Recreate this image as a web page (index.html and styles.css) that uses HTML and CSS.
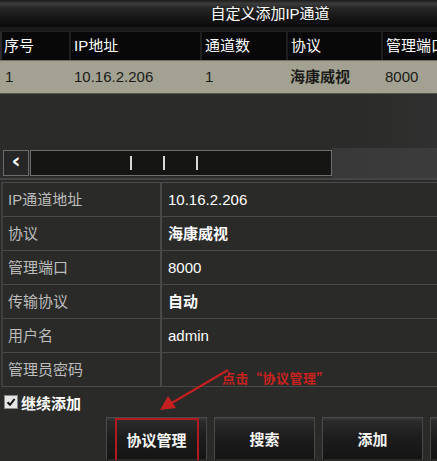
FILE: index.html
```html
<!DOCTYPE html>
<html>
<head>
<meta charset="utf-8">
<link rel="stylesheet" href="styles.css">
</head>
<body>
<div class="dialog">
  <div class="titlebar"><span class="title">自定义添加IP通道</span></div>
  <div class="list">
    <div class="thead">
      <div class="c c1">序号</div>
      <div class="c c2">IP地址</div>
      <div class="c c3">通道数</div>
      <div class="c c4">协议</div>
      <div class="c c5">管理端口</div>
    </div>
    <div class="trow">
      <div class="c c1">1</div>
      <div class="c c2">10.16.2.206</div>
      <div class="c c3">1</div>
      <div class="c c4 bold">海康威视</div>
      <div class="c c5">8000</div>
    </div>
    <div class="empty"></div>
    <div class="scrollrow">
      <div class="sbtn">&lsaquo;</div>
      <div class="track">
        <span class="tick"></span><span class="tick"></span><span class="tick"></span>
      </div>
    </div>
  </div>
  <div class="form">
    <div class="frow"><div class="lbl">IP通道地址</div><div class="val">10.16.2.206</div></div>
    <div class="frow"><div class="lbl">协议</div><div class="val bold">海康威视</div></div>
    <div class="frow"><div class="lbl">管理端口</div><div class="val">8000</div></div>
    <div class="frow"><div class="lbl">传输协议</div><div class="val bold">自动</div></div>
    <div class="frow"><div class="lbl">用户名</div><div class="val">admin</div></div>
    <div class="frow"><div class="lbl">管理员密码</div><div class="val"></div></div>
  </div>
  <div class="checkrow">
    <span class="cbox"><svg width="10" height="10" viewBox="0 0 10 10"><path d="M1.5 5.2 L4 7.8 L8.6 2" fill="none" stroke="#111" stroke-width="2"/></svg></span>
    <span class="clabel">继续添加</span>
  </div>
  <div class="btnrow">
    <div class="btn"><span class="hl">协议管理</span></div>
    <div class="btn">搜索</div>
    <div class="btn">添加</div>
    <div class="btn"></div>
  </div>
  <div class="note">
    <svg class="arrow" width="80" height="50" viewBox="0 0 80 50">
      <line x1="72" y1="6" x2="14" y2="40" stroke="#c42020" stroke-width="2.2"/>
      <polygon points="4,46 12,32 20,44" fill="#c42020"/>
    </svg>
    <span class="notetext">点击“协议管理”</span>
  </div>
</div>
</body>
</html>
```
FILE: styles.css
```css
html, body {
  margin: 0;
  padding: 0;
  background: #2a2a28;
  overflow: hidden;
}
body {
  width: 437px;
  height: 461px;
  font-family: "Liberation Sans", "Noto Sans CJK SC", sans-serif;
}
.dialog {
  position: relative;
  width: 540px;
  height: 461px;
  background: #2a2a28;
  color: #fff;
}
.titlebar {
  height: 27px;
  background: linear-gradient(#1c1c1c 0%, #3c3c3c 14%, #262626 30%, #141414 70%, #0c0c0c 100%);
  text-align: center;
  font-size: 15px;
  line-height: 27px;
  border-bottom: 4px solid #1a1a1a;
}
.title {
  display: inline-block;
}
.list {
  background: #2b2b29;
}
.thead {
  display: grid;
  grid-template-columns: 69px 131px 86px 95px 159px;
  height: 28px;
  background: #080808;
  border-top: 1px solid #222;
  font-size: 15px;
  line-height: 28px;
}
.thead .c {
  border-left: 2px solid #1f1f1f;
  padding-left: 3px;
}
.thead .c1 { border-left: 2px solid #2a2a2a; padding-left: 2px; }
.trow {
  display: grid;
  grid-template-columns: 69px 131px 86px 95px 159px;
  height: 32px;
  background: #a3a292;
  color: #1a1a18;
  font-size: 15px;
  line-height: 32px;
  border-top: 1px solid #70706a;
  border-bottom: 1px solid #55554f;
}
.trow .c { padding-left: 5px; }
.trow .c4 { padding-left: 4px; }
.trow .c5 { padding-left: 4px; }
.bold { font-weight: bold; }
.empty {
  height: 54px;
  background: linear-gradient(90deg, #2b2b29 0px, #2b2b29 360px, #303030 437px);
}
.scrollrow {
  display: flex;
  align-items: center;
  height: 30px;
  background: linear-gradient(90deg, #2b2b29 0px, #2b2b29 332px, #383838 332px, #3c3c3c 437px);
  border-bottom: 2px solid #454545;
  padding-left: 3px;
}
.sbtn {
  width: 24px;
  height: 24px;
  border: 1px solid #6c6c6c;
  background: #262626;
  color: #fff;
  font-size: 22px;
  font-weight: bold;
  line-height: 20px;
  text-align: center;
  font-family: "DejaVu Sans", sans-serif;
}
.track {
  display: flex;
  gap: 31px;
  align-items: center;
  width: 302px;
  height: 26px;
  border: 1px solid #6e6e6e;
  background: #151513;
  margin-left: 1px;
  padding-left: 99px;
  box-sizing: border-box;
}
.tick {
  display: block;
  width: 2px;
  height: 14px;
  background: #d8d8d8;
}
.form {
  margin-top: 2px;
  border-top: 1px solid #4c4c4c;
  border-left: 2px solid #3e3e3e;
  margin-left: 1px;
}
.frow {
  display: grid;
  grid-template-columns: 159px 1fr;
  height: 33px;
  border-bottom: 1px solid #4a4a4a;
  font-size: 15px;
  line-height: 33px;
}
.lbl {
  color: #bdbdbd;
  padding-left: 5px;
  border-right: 2px solid #484848;
}
.val {
  color: #fff;
  padding-left: 6px;
}
.checkrow {
  display: flex;
  align-items: center;
  height: 30px;
  padding-left: 4px;
  gap: 3px;
}
.cbox {
  display: flex;
  align-items: center;
  justify-content: center;
  width: 12px;
  height: 12px;
  background: #e6e6e6;
  border: 1px solid #888;
}
.clabel {
  font-size: 15px;
  font-weight: bold;
  color: #fff;
}
.btnrow {
  display: flex;
  gap: 7px;
  padding-left: 106px;
}
.btn {
  width: 101px;
  height: 42px;
  flex: none;
  background: linear-gradient(#3a3a3a 0%, #2a2a2a 8%, #1c1c1c 50%, #141414 100%);
  border: 1px solid #4a4a4a;
  border-bottom: none;
  display: flex;
  align-items: center;
  justify-content: center;
  font-size: 15px;
  font-weight: bold;
  color: #f4f4f4;
  box-sizing: border-box;
}
.btn .hl {
  display: flex;
  align-items: center;
  justify-content: center;
  width: 84px;
  height: 42px;
  border: 2px solid #b11a1e;
  border-bottom: none;
  box-sizing: border-box;
}
.note {
  position: absolute;
  left: 156px;
  top: 364px;
  display: flex;
  align-items: flex-start;
}
.arrow {
  display: block;
}
.notetext {
  margin-left: -14px;
  margin-top: 4px;
  color: #c8221f;
  font-size: 13px;
  font-weight: bold;
  font-family: "Noto Sans CJK SC", sans-serif;
  letter-spacing: 0.5px;
}
```
